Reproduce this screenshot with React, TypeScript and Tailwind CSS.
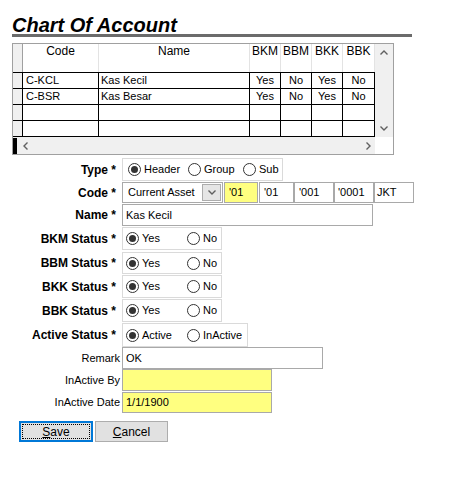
import React from 'react';

const Up = () => (
  <svg width="8" height="5" viewBox="0 0 8 5">
    <polyline points="0.5,4.5 4,1 7.5,4.5" fill="none" stroke="#606060" strokeWidth="1.4" />
  </svg>
);
const Down = () => (
  <svg width="8" height="5" viewBox="0 0 8 5">
    <polyline points="0.5,0.5 4,4 7.5,0.5" fill="none" stroke="#606060" strokeWidth="1.4" />
  </svg>
);
const Left = () => (
  <svg width="5" height="8" viewBox="0 0 5 8">
    <polyline points="4.5,0.5 1,4 4.5,7.5" fill="none" stroke="#606060" strokeWidth="1.4" />
  </svg>
);
const Right = () => (
  <svg width="5" height="8" viewBox="0 0 5 8">
    <polyline points="0.5,0.5 4,4 0.5,7.5" fill="none" stroke="#606060" strokeWidth="1.4" />
  </svg>
);

const rows = [
  ['C-KCL', 'Kas Kecil', 'Yes', 'No', 'Yes', 'No'],
  ['C-BSR', 'Kas Besar', 'Yes', 'No', 'Yes', 'No'],
  ['', '', '', '', '', ''],
  ['', '', '', '', '', ''],
];

function Grid() {
  return (
    <div className="ml-[12px] mt-[6px] w-[382px] h-[112px] border border-[#a0a0a0] flex flex-col">
      <div className="flex h-[93px]">
        <div className="w-[362px] flex flex-col">
          {/* header */}
          <div className="flex h-[29px] border-b border-black text-[12px] leading-[14px]">
            <div className="w-[10px] bg-[#f0f0f0] border-r border-[#a0a0a0]" />
            <div className="w-[76px] text-center border-r border-[#e3e3e3]">Code</div>
            <div className="w-[151px] text-center border-r border-[#e3e3e3]">Name</div>
            <div className="w-[31px] text-center border-r border-[#e3e3e3]">BKM</div>
            <div className="w-[31px] text-center border-r border-[#e3e3e3]">BBM</div>
            <div className="w-[31px] text-center border-r border-[#e3e3e3]">BKK</div>
            <div className="w-[32px] text-center border-r border-[#e3e3e3]">BBK</div>
          </div>
          {rows.map((r, i) => (
            <div key={i} className="flex h-[16px] border-b border-black text-[11px] leading-[15px]">
              <div className="w-[10px] bg-[#f0f0f0] border-r border-black" />
              <div className="w-[76px] pl-[3px] border-r border-black">{r[0]}</div>
              <div className="w-[151px] pl-[2px] border-r border-black">{r[1]}</div>
              <div className="w-[31px] text-center border-r border-black">{r[2]}</div>
              <div className="w-[31px] text-center border-r border-black">{r[3]}</div>
              <div className="w-[31px] text-center border-r border-black">{r[4]}</div>
              <div className="w-[32px] text-center border-r border-black">{r[5]}</div>
            </div>
          ))}
        </div>
        <div className="w-[18px] bg-[#f0f0f0] flex flex-col items-center justify-between pt-[6px] pb-[6px]">
          <Up />
          <Down />
        </div>
      </div>
      <div className="flex h-[17px]">
        <div className="w-[362px] bg-[#f0f0f0] flex items-center">
          <div className="w-[4px] h-[16px] bg-black" />
          <div className="ml-[6px]">
            <Left />
          </div>
          <div className="ml-auto mr-[4px]">
            <Right />
          </div>
        </div>
        <div className="w-[18px] bg-white" />
      </div>
    </div>
  );
}

function Radio({ checked, label, className }: { checked?: boolean; label: string; className?: string }) {
  return (
    <div className={`flex items-center ${className ?? ''}`}>
      <span className="w-[13px] h-[13px] rounded-full border border-[#333333] bg-white flex items-center justify-center shrink-0">
        {checked && <span className="w-[7px] h-[7px] rounded-full bg-[#333333]" />}
      </span>
      <span className="ml-[3px]">{label}</span>
    </div>
  );
}

function Row({
  label,
  bold = true,
  h,
  boxH,
  children,
}: {
  label: string;
  bold?: boolean;
  h: string;
  boxH: string;
  children: React.ReactNode;
}) {
  return (
    <div className={`flex items-start ${h}`}>
      <div
        className={`w-[122px] shrink-0 flex items-center justify-end whitespace-nowrap ${boxH} ${
          bold ? 'font-bold text-[12px] pr-[6px]' : 'pr-[2px]'
        }`}
      >
        {label}
      </div>
      {children}
    </div>
  );
}

function StatusBox({ a = 'Yes', b = 'No', w = 'w-[100px]', h = 'h-[23px]' }: { a?: string; b?: string; w?: string; h?: string }) {
  return (
    <div className={`${w} ${h} border border-[#dadada] bg-white flex items-center pl-[3px]`}>
      <Radio checked label={a} className="w-[61px]" />
      <Radio label={b} />
    </div>
  );
}

export default function App() {
  return (
    <div className="w-[450px] h-[500px] bg-white text-black text-[11px] font-['Liberation_Sans',Arial,sans-serif]">
      <div className="pt-[13px]">
        <div className="ml-[12px] h-[21px] leading-[24px] text-[20px] font-bold italic">Chart Of Account</div>
        <div className="ml-[12px] w-[400px] h-[3px] bg-[#6b6b6b]" />
      </div>

      <Grid />

      <div className="mt-[3px] flex flex-col">
        <Row label="Type *" h="h-[24px]" boxH="h-[23px]">
          <div className="w-[161px] h-[23px] border border-[#dadada] bg-white flex items-center pl-[5px]">
            <Radio checked label="Header" className="w-[60px]" />
            <Radio label="Group" className="w-[55px]" />
            <Radio label="Sub" />
          </div>
        </Row>

        <Row label="Code *" h="h-[22px]" boxH="h-[21px]">
          <div className="flex h-[21px]">
            <div className="w-[101px] h-[21px] border border-[#a9a9a9] bg-white flex items-center pl-[5px] pr-[1px]">
              <span className="flex-1">Current Asset</span>
              <div className="w-[19px] h-[17px] bg-[#e5e5e5] border border-[#acacac] flex items-center justify-center">
                <Down />
              </div>
            </div>
            <div className="ml-[1px] w-[34px] h-[21px] border border-[#a9a9a9] bg-[#ffff80] flex items-center pl-[4px]">'01</div>
            <div className="ml-[1px] w-[35px] h-[21px] border border-[#a9a9a9] bg-white flex items-center pl-[4px]">'01</div>
            <div className="w-[40px] h-[21px] border border-[#a9a9a9] bg-white flex items-center pl-[4px]">'001</div>
            <div className="w-[40px] h-[21px] border border-[#a9a9a9] bg-white flex items-center pl-[3px]">'0001</div>
            <div className="w-[40px] h-[21px] border border-[#a9a9a9] bg-white flex items-center pl-[2px]">JKT</div>
          </div>
        </Row>

        <Row label="Name *" h="h-[23px]" boxH="h-[22px]">
          <div className="w-[251px] h-[22px] border border-[#a9a9a9] bg-white flex items-center pl-[3px]">Kas Kecil</div>
        </Row>

        <Row label="BKM Status *" h="h-[25px]" boxH="h-[23px]">
          <StatusBox />
        </Row>
        <Row label="BBM Status *" h="h-[23px]" boxH="h-[22px]">
          <StatusBox h="h-[22px]" />
        </Row>
        <Row label="BKK Status *" h="h-[24px]" boxH="h-[23px]">
          <StatusBox />
        </Row>
        <Row label="BBK Status *" h="h-[24px]" boxH="h-[23px]">
          <StatusBox />
        </Row>
        <Row label="Active Status *" h="h-[24px]" boxH="h-[24px]">
          <StatusBox a="Active" b="InActive" w="w-[126px]" h="h-[24px]" />
        </Row>

        <Row label="Remark" bold={false} h="h-[22px]" boxH="h-[22px]">
          <div className="w-[201px] h-[22px] border border-[#a9a9a9] bg-white flex items-center pl-[3px]">OK</div>
        </Row>
        <Row label="InActive By" bold={false} h="h-[23px]" boxH="h-[22px]">
          <div className="w-[150px] h-[22px] border border-[#a9a9a9] bg-[#ffff80]" />
        </Row>
        <Row label="InActive Date" bold={false} h="h-[29px]" boxH="h-[21px]">
          <div className="w-[150px] h-[21px] border border-[#a9a9a9] bg-[#ffff80] flex items-center pl-[3px]">1/1/1900</div>
        </Row>

        <div className="flex ml-[19px] text-[12px]">
          <button className="w-[74px] h-[21px] border-2 border-[#0078d7] bg-[#e1e1e1] p-[1px]">
            <div className="w-full h-full border border-dotted border-black flex items-center justify-center">
              <span><u>S</u>ave</span>
            </div>
          </button>
          <button className="ml-[2px] w-[73px] h-[21px] border border-[#adadad] bg-[#e1e1e1] flex items-center justify-center">
            <span><u>C</u>ancel</span>
          </button>
        </div>
      </div>
    </div>
  );
}
